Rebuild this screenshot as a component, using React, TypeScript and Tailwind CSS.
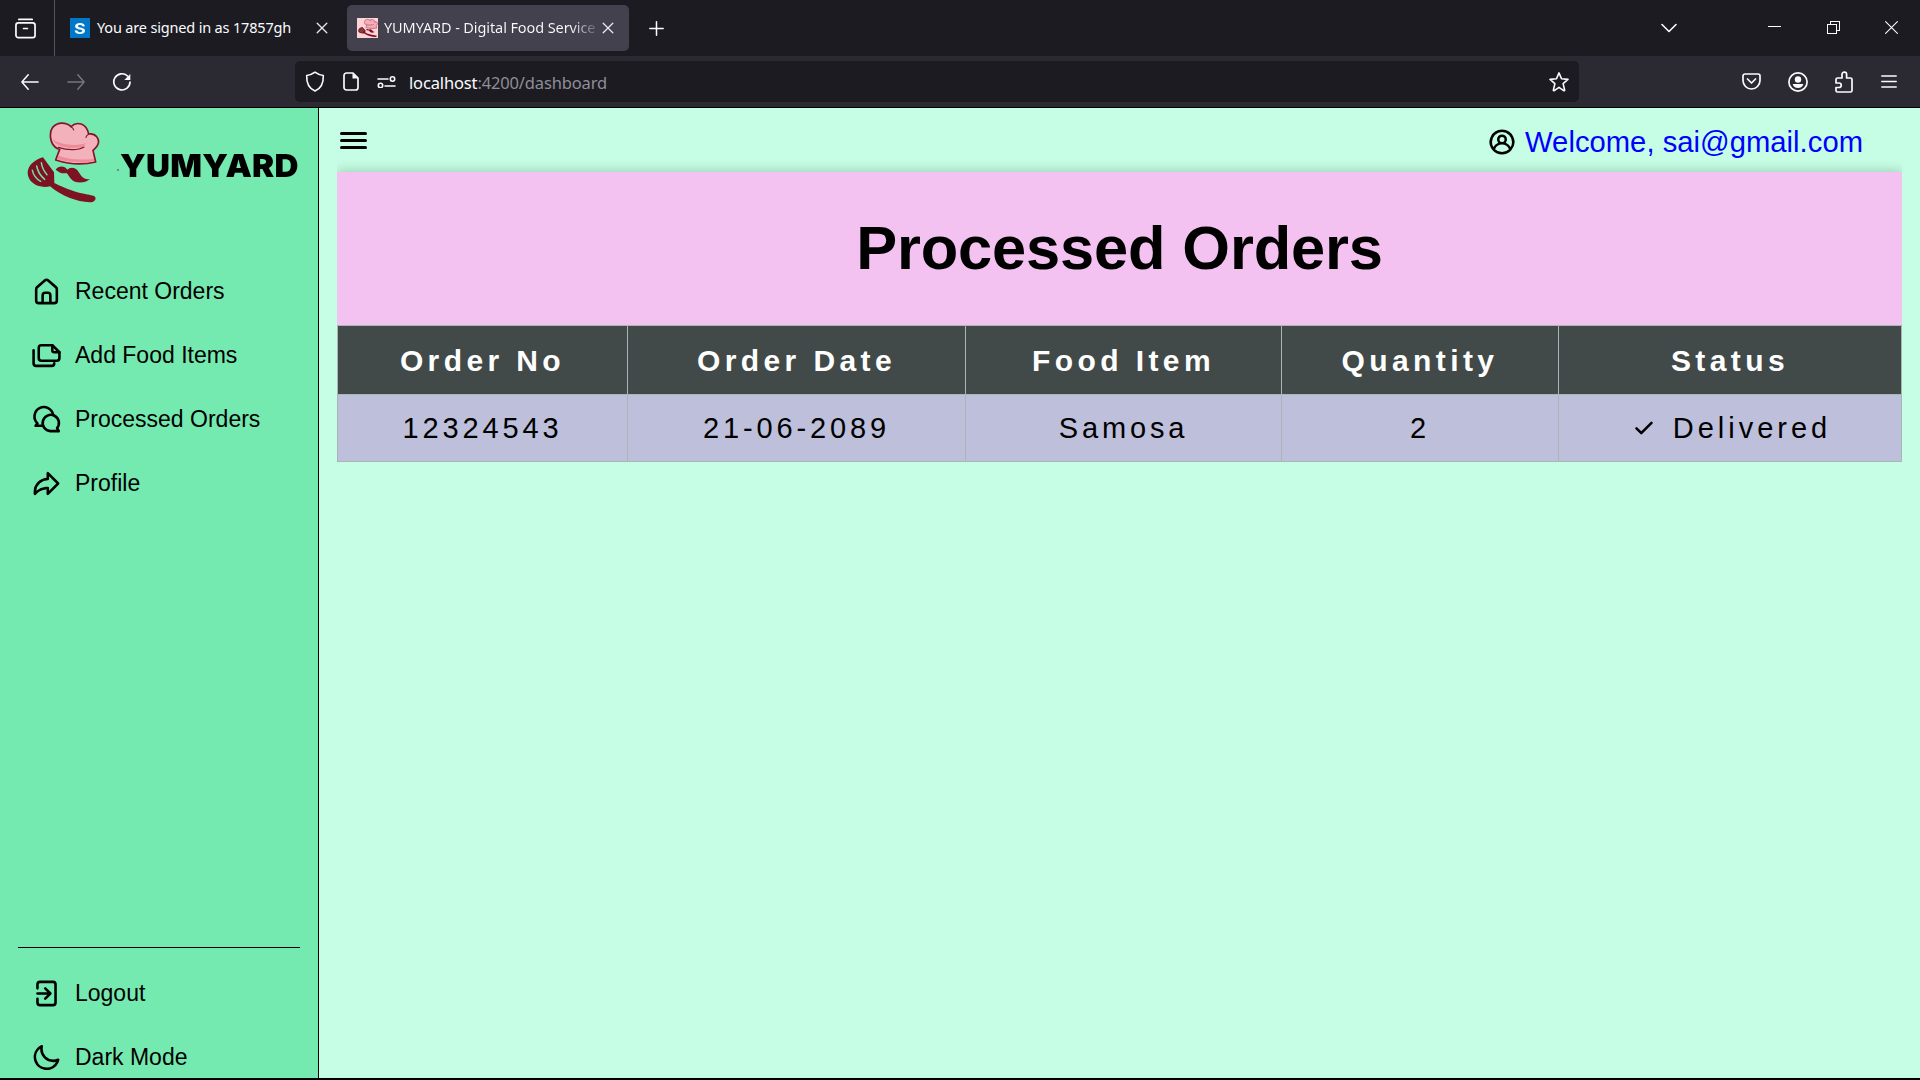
import type { ReactNode } from "react";

const PATHS = {
  home: "M20,8h0L14,2.74a3,3,0,0,0-4,0L4,8a3,3,0,0,0-1,2.26V19a3,3,0,0,0,3,3H18a3,3,0,0,0,3-3V10.25A3,3,0,0,0,20,8ZM14,20H10V15a1,1,0,0,1,1-1h2a1,1,0,0,1,1,1Zm5-1a1,1,0,0,1-1,1H16V15a3,3,0,0,0-3-3H11a3,3,0,0,0-3,3v5H6a1,1,0,0,1-1-1V10.25a1,1,0,0,1,.34-.75l6-5.25a1,1,0,0,1,1.32,0l6,5.25a1,1,0,0,1,.34.75Z",
  share: "m21.707 11.293-8-8A1 1 0 0 0 12 4v3.545A11.015 11.015 0 0 0 2 18.5V20a1 1 0 0 0 1.784.62 11.456 11.456 0 0 1 7.887-4.049c.05-.006.175-.016.329-.026V20a1 1 0 0 0 1.707.707l8-8a1 1 0 0 0 0-1.414ZM14 17.586V15.5a1 1 0 0 0-1-1c-.255 0-1.296.05-1.562.085a14.005 14.005 0 0 0-7.386 2.948A9.013 9.013 0 0 1 13 9.5a1 1 0 0 0 1-1V6.414L19.586 12Z",
  signout: "M4,12a1,1,0,0,0,1,1h7.59l-2.3,2.29a1,1,0,0,0,0,1.42,1,1,0,0,0,1.42,0l4-4a1,1,0,0,0,.21-.33,1,1,0,0,0,0-.76,1,1,0,0,0-.21-.33l-4-4a1,1,0,1,0-1.42,1.42L12.59,11H5A1,1,0,0,0,4,12ZM17,2H7A3,3,0,0,0,4,5V8A1,1,0,0,0,6,8V5A1,1,0,0,1,7,4H17a1,1,0,0,1,1,1V19a1,1,0,0,1-1,1H7a1,1,0,0,1-1-1V16a1,1,0,0,0-2,0v3a3,3,0,0,0,3,3H17a3,3,0,0,0,3-3V5A3,3,0,0,0,17,2Z",
  moon: "M21.64,13a1,1,0,0,0-1.05-.14,8.05,8.05,0,0,1-3.37.73A8.15,8.15,0,0,1,9.08,5.49a8.59,8.59,0,0,1,.25-2A1,1,0,0,0,8,2.36,10.14,10.14,0,1,0,22,14.05,1,1,0,0,0,21.64,13Zm-9.5,6.69A8.14,8.14,0,0,1,7.08,5.22v.27A10.15,10.15,0,0,0,17.22,15.63a9.79,9.79,0,0,0,2.1-.22A8.11,8.11,0,0,1,12.14,19.73Z",
  user: "M12,2A10,10,0,0,0,4.65,18.76h0a10,10,0,0,0,14.7,0h0A10,10,0,0,0,12,2Zm0,18a8,8,0,0,1-5.55-2.25,6,6,0,0,1,11.1,0A8,8,0,0,1,12,20ZM10,10a2,2,0,1,1,2,2A2,2,0,0,1,10,10Zm8.91,6A8,8,0,0,0,15,12.62a4,4,0,1,0-6,0A8,8,0,0,0,5.09,16,7.92,7.92,0,0,1,4,12a8,8,0,0,1,16,0A7.92,7.92,0,0,1,18.91,16Z",
  check: "M18.71,7.21a1,1,0,0,0-1.42,0L9.84,14.67,6.71,11.53A1,1,0,1,0,5.29,13l3.84,3.84a1,1,0,0,0,1.42,0l8.16-8.16A1,1,0,0,0,18.71,7.21Z",
};

function Solid({ d, className = "size-[31px]" }: { d: string; className?: string }) {
  return (
    <svg viewBox="0 0 24 24" fill="currentColor" className={className}>
      <path d={d} />
    </svg>
  );
}

function Line({ children, className = "size-5", box = "0 0 20 20", w = 1.7 }: { children: ReactNode; className?: string; box?: string; w?: number }) {
  return (
    <svg viewBox={box} fill="none" stroke="currentColor" strokeWidth={w} strokeLinecap="round" strokeLinejoin="round" className={className}>
      {children}
    </svg>
  );
}

function ChefArt() {
  return (
    <>
      <path d="M143 116C118 104 117 68 128 52C143 35 168 36 183 50C201 33 229 39 236 72C257 69 270 86 264 103C261 113 252 118 249 121L257 156C220 165 174 162 137 150L149 118Z" fill="#f3b1bb" stroke="#85132a" strokeWidth="5" strokeLinejoin="round" />
      <path d="M128 88C139 112 181 119 218 110L229 100C191 110 151 104 128 88ZM146 137C180 149 221 151 251 146L253 153C219 160 179 157 142 148Z" fill="#ec8c98" />
      <path d="M145 112C174 122 205 121 222 111M183 50Q190 54 191 60M236 73Q229 76 228 82" fill="none" stroke="#85132a" strokeWidth="3.5" strokeLinecap="round" />
      <path d="M137 179C145 167 163 165 172 179C180 170 195 171 204 183C213 197 221 211 240 207C227 220 200 221 187 211C178 203 175 193 169 189C158 192 148 188 137 179Z" fill="#7d1222" />
      <path d="M99 142C86 145 65 156 56 174C49 190 55 209 70 220C84 232 106 232 120 229C154 258 201 276 239 277C253 277 260 268 255 260C247 252 207 257 133 219L132 187Z" fill="#7d1222" />
      <path d="M94 158Q97 179 111 194M80 168Q84 191 104 208M67 181Q72 203 92 214" fill="none" stroke="#79d9a9" strokeWidth="4.5" strokeLinecap="round" />
    </>
  );
}

const TabClose = () => (
  <Line className="size-3 shrink-0 text-[#e8e8ee]" box="0 0 12 12" w={1.3}>
    <path d="M1.2 1.2l9.6 9.6M10.8 1.2l-9.6 9.6" />
  </Line>
);

function BrowserChrome() {
  return (
    <header className="h-[108px] border-b border-black bg-[#2b2a33] text-[#fbfbfe] [font-family:'Noto_Sans',sans-serif]">
      <div className="flex h-14 bg-[#1c1b22]">
        <div className="flex w-[55px] items-center border-r border-[#56555f] pl-[15px]">
          <Line className="size-[21px]" box="0 0 22 22" w={1.8}>
            <path d="M4 1.5h14" />
            <rect x="1" y="5" width="20" height="15.5" rx="2.5" />
            <path d="M9 11h4" />
          </Line>
        </div>
        <div className="flex w-[292px] items-center pl-[15px]">
          <span className="flex size-5 shrink-0 items-center justify-center bg-[#0078c8]">
            <span className="scale-x-120 text-[15px] leading-none font-bold [font-family:Inter,sans-serif]">S</span>
          </span>
          <span className="w-[226px] shrink-0 pl-[7px] text-[14.5px] tracking-[-0.17px] whitespace-nowrap">You are signed in as 17857gh</span>
          <TabClose />
        </div>
        <div className="mt-[5px] flex h-[46px] w-[282px] items-center rounded-[5px] bg-[#42414d] pl-[10px]">
          <svg viewBox="40 20 230 270" preserveAspectRatio="none" className="h-5 w-[21px] shrink-0 bg-[#ffd3d8]">
            <ChefArt />
          </svg>
          <span className="ml-[6px] w-[214px] shrink-0 overflow-hidden bg-linear-to-r from-[#fbfbfe] from-87% to-[#5a5966] bg-clip-text text-[14.5px] tracking-[-0.1px] whitespace-nowrap text-transparent">YUMYARD - Digital Food Service</span>
          <span className="ml-[4px]"><TabClose /></span>
        </div>
        <div className="flex flex-1 items-center pl-5">
          <Line className="size-[15px]" box="0 0 15 15" w={1.5}><path d="M7.5 .8v13.4M.8 7.5h13.4" /></Line>
        </div>
        <div className="flex w-[260px] items-center pl-px">
          <Line className="h-[10px] w-4" box="0 0 16 10" w={1.6}><path d="M1 1.5l7 7 7-7" /></Line>
          <span className="-mt-[3px] ml-[91px] h-px w-[13px] bg-white" />
          <svg viewBox="0 0 13 13" className="-mt-px ml-[46px] size-[13px]" fill="none" stroke="currentColor" shapeRendering="crispEdges">
            <rect x=".5" y="3.5" width="9" height="9" />
            <path d="M3.5 3V.5h9v9H10" />
          </svg>
          <Line className="-mt-px ml-[45px] size-[13px]" box="0 0 13 13" w={1.1}><path d="M.6.6l11.8 11.8M12.4.6L.6 12.4" /></Line>
        </div>
      </div>
      <div className="flex h-[51px] items-center">
        <div className="flex w-[295px] items-center gap-[27px] pt-px pl-5">
          <Line className="h-[18px] w-5" w={1.7}><path d="M19 10H1M8 2L1 10l7 8" /></Line>
          <Line className="-ml-px h-[18px] w-5 text-[#77767e]" w={1.6}><path d="M1 10h18M12 2l7 8-7 8" /></Line>
          <Line className="-ml-px size-5" w={1.7}>
            <path d="M15.500 4A8.100 8.100 0 1 0 18 10" />
            <path d="M18.3 2v6h-6z" fill="currentColor" stroke="none" />
          </Line>
        </div>
        <div className="flex h-[41px] w-[1284px] items-center rounded-[5px] bg-[#1c1b22] pl-[10px]">
          <Line className="h-[21px] w-5" box="0 0 20 21" w={1.6}><path d="M10 1.2C7 3.5 4.5 4.2 1.7 4.5C1.4 12 4 17.5 10 20C16 17.5 18.6 12 18.3 4.5C15.5 4.2 13 3.5 10 1.2Z" /></Line>
          <Line className="ml-[18px] h-[19px] w-4" box="0 0 16 19" w={1.7}>
            <path d="M10 1H3.5A2.5 2.5 0 0 0 1 3.500V15.500A2.500 2.500 0 0 0 3.500 18h9A2.500 2.500 0 0 0 15 15.500V6Z" />
            <path d="M9.500 1v5.500H15z" fill="currentColor" stroke="none" />
          </Line>
          <Line className="ml-[18px] h-3 w-[19px]" box="0 0 19 12" w={1.6}>
            <path d="M1 3h10M8 10h10" />
            <circle cx="15.500" cy="3" r="2.200" /><circle cx="3.500" cy="9.500" r="2.200" />
          </Line>
          <span className="mt-[3px] ml-[13px] text-[16.5px] tracking-[-0.15px] whitespace-nowrap">localhost<span className="text-[#8f8e97]">:4200/dashboard</span></span>
          <Line className="mr-[10px] ml-auto size-5" w={1.6}><path d="M10 .9l2.500 5.900 6.500.6-4.900 4.200 1.500 6.400c.1.600-.4.900-.9.600L10 15.400l-4.700 3.200c-.5.300-1 0-.9-.6l1.500-6.400L1 7.400l6.500-.6Z" /></Line>
        </div>
        <div className="flex flex-1 items-center pl-[163px]">
          <Line className="h-[17px] w-[19px]" box="0 0 19 17" w={1.7}>
            <path d="M3 1h13a2 2 0 0 1 2 2v4.500a8.500 8.500 0 0 1-17 0V3a2 2 0 0 1 2-2ZM5.500 6l4 4 4-4" />
          </Line>
          <Line className="ml-[27px] size-5">
            <circle cx="10" cy="10" r="9.100" />
            <circle cx="10" cy="7.500" r="3.200" fill="currentColor" stroke="none" />
            <path d="M4.700 12h10.600c-.5 2.500-2.500 4-5.300 4s-4.800-1.500-5.300-4Z" fill="currentColor" stroke="none" />
          </Line>
          <Line className="ml-[27px] h-[22px] w-[18px]" box="0 0 18 22" w={1.7}>
            <path d="M1 8.500a1.500 1.500 0 0 1 1.500-1.500H7V3.500a2.300 2.300 0 0 1 4.600 0V7h3.900A1.500 1.500 0 0 1 17 8.500v11A1.500 1.500 0 0 1 15.500 21H2.500A1.500 1.500 0 0 1 1 19.500V16.500h3a2.200 2.200 0 0 0 0-4.500H1Z" />
          </Line>
          <Line className="-mt-px ml-[28px] h-[13px] w-4" box="0 0 16 13" w={1.5}><path d="M.8 1h14.400M.8 6.500h14.400M.8 12h14.400" /></Line>
        </div>
      </div>
    </header>
  );
}

function NavItem({ icon, label }: { icon: ReactNode; label: string }) {
  return (
    <li className="flex h-16 items-center">
      <span className="flex w-[44px] shrink-0">{icon}</span>
      <span className="text-[23px] whitespace-nowrap">{label}</span>
    </li>
  );
}

const FilesIcon = () => (
  <Line className="size-[31px]" box="0 0 24 24" w={2}>
    <path d="M8 4h8.500L22 9.500V14a2 2 0 0 1-2 2H8a2 2 0 0 1-2-2V6a2 2 0 0 1 2-2Z" />
    <path d="M16.500 4v4a1.500 1.500 0 0 0 1.500 1.500h4M2 8v10a2 2 0 0 0 2 2h12a2 2 0 0 0 2-2" />
  </Line>
);

const CommentsIcon = () => (
  <Line className="size-[31px]" box="0 0 24 24" w={2}>
    <path d="M17.200 8.500A7.300 7.300 0 1 0 5 15L3.500 16.900H8.500" />
    <path d="M20.200 18.700A6.300 6.300 0 1 0 15 21H21.500Z" />
  </Line>
);

const columns = ["Order No", "Order Date", "Food Item", "Quantity", "Status"];
const orders = [{ no: "12324543", date: "21-06-2089", item: "Samosa", quantity: "2", status: "Delivered" }];

export default function App() {
  return (
    <div className="flex h-[1080px] w-[1920px] flex-col overflow-hidden bg-black text-black [font-family:'Liberation_Sans',Arial,sans-serif]">
      <BrowserChrome />
      <div className="flex h-[970px]">
        <aside className="flex w-[319px] flex-col border-r border-black bg-[#75eab0]">
          <div className="flex h-[142px] pt-3 pl-[25px]">
            <svg viewBox="45 30 225 255" className="h-[85px] w-[75px]"><ChefArt /></svg>
            <span className="mt-[49px] ml-[17px] h-[2px] w-[2px] bg-[#55997e]" />
            <span className="mt-[26px] ml-px origin-left scale-x-[1.055] text-[31.500px] leading-10 font-black tracking-[0.2px] whitespace-nowrap [font-family:Inter,sans-serif]">YUMYARD</span>
          </div>
          <ul className="pt-[9px] pl-[31px]">
            <NavItem icon={<Solid d={PATHS.home} />} label="Recent Orders" />
            <NavItem icon={<FilesIcon />} label="Add Food Items" />
            <NavItem icon={<CommentsIcon />} label="Processed Orders" />
            <NavItem icon={<Solid d={PATHS.share} />} label="Profile" />
          </ul>
          <ul className="mx-[18px] mt-auto -mb-[11px] border-t border-black pt-[13px] pl-[13px]">
            <NavItem icon={<Solid d={PATHS.signout} />} label="Logout" />
            <NavItem icon={<Solid d={PATHS.moon} />} label="Dark Mode" />
          </ul>
        </aside>
        <main className="flex-1 bg-[#c5fee4] pr-[18px] pl-[18px]">
          <div className="flex h-16 items-start justify-between pr-[39px] pl-[3px]">
            <div className="flex flex-col gap-1 pt-6">
              <span className="h-[3px] w-[27px] rounded-full bg-black" />
              <span className="h-[3px] w-[27px] rounded-full bg-black" />
              <span className="h-[3px] w-[27px] rounded-full bg-black" />
            </div>
            <div className="flex items-center gap-[8px] pt-[14px]">
              <Solid d={PATHS.user} className="size-[30px]" />
              <span className="text-[29.200px] leading-10 tracking-[0.03px] whitespace-nowrap text-[#0000ff]">Welcome, sai@gmail.com</span>
            </div>
          </div>
          <section className="shadow-[0_-2px_10px_rgba(0,0,0,0.18)] [clip-path:inset(-16px_0_0_0)]">
            <h1 className="h-[153px] bg-[#f4c2f1] text-center text-[61.400px] leading-[151px] font-bold tracking-[-0.15px]">Processed Orders</h1>
            <table className="w-[1565px] table-fixed border-collapse text-center">
              <colgroup>
                <col className="w-[290px]" /><col className="w-[338px]" /><col className="w-[316px]" /><col className="w-[277px]" /><col className="w-[343px]" />
              </colgroup>
              <thead>
                <tr className="h-[69px] bg-[#424a49] text-[30px] tracking-[4.400px] text-white">
                  {columns.map((c) => (
                    <th key={c} className="border border-[#a9b6b5] p-0 font-bold">{c}</th>
                  ))}
                </tr>
              </thead>
              <tbody>
                {orders.map((o) => (
                  <tr key={o.no} className="h-[67px] bg-[#bdbfdb] text-[29px] tracking-[3.850px]">
                    <td className="border border-[#a9b6b5] p-0 pt-[2px]">{o.no}</td>
                    <td className="border border-[#a9b6b5] p-0 pt-[2px]">{o.date}</td>
                    <td className="border border-[#a9b6b5] p-0 pt-[2px]">{o.item}</td>
                    <td className="border border-[#a9b6b5] p-0 pt-[2px]">{o.quantity}</td>
                    <td className="border border-[#a9b6b5] p-0 pt-[2px]">
                      <div className="flex items-center justify-center gap-[14px]">
                        <Solid d={PATHS.check} className="-mt-[2px] size-[30px]" />
                        <span className="tracking-[4px]">{o.status}</span>
                      </div>
                    </td>
                  </tr>
                ))}
              </tbody>
            </table>
          </section>
        </main>
      </div>
    </div>
  );
}
